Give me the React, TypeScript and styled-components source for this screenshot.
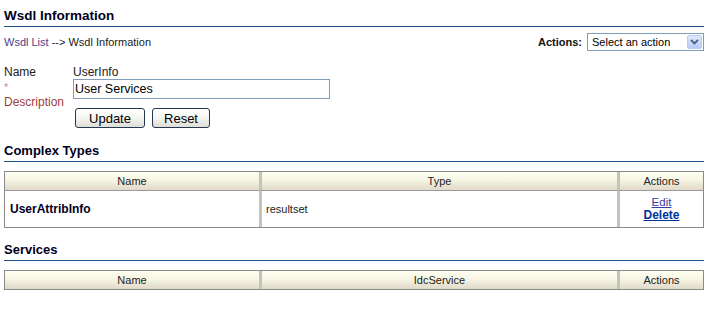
import React from "react";
import styled, { createGlobalStyle } from "styled-components";

const GlobalStyle = createGlobalStyle`
  html, body { margin: 0; padding: 0; background: #ffffff; }
  body { font-family: "Liberation Sans", Arial, sans-serif; color: #1a1a1a; }
  * { box-sizing: border-box; }
`;

const Page = styled.div`
  width: 700px;
  margin-left: 4px;
  padding-top: 8px;
`;

const SectionTitle = styled.h2<{ $size: number; $mt: number }>`
  margin: ${(p) => p.$mt}px 0 0;
  font-size: ${(p) => p.$size}px;
  line-height: 16px;
  font-weight: bold;
  color: #000022;
  padding-bottom: 2px;
  border-bottom: 1px solid #1f4f8a;
`;

const NavBar = styled.div`
  display: flex;
  justify-content: space-between;
  align-items: center;
  margin-top: 6px;
  height: 18px;
`;

const Breadcrumb = styled.div`
  font-size: 11px;
  line-height: 13px;
  color: #222;
`;

const CrumbLink = styled.span`
  color: #4a3f8c;
`;

const ActionsGroup = styled.div`
  display: flex;
  align-items: center;
  gap: 5px;
`;

const ActionsLabel = styled.span`
  font-size: 11px;
  font-weight: bold;
  line-height: 13px;
  color: #111;
`;

const SelectBox = styled.div`
  width: 117px;
  height: 18px;
  border: 1px solid #7f9db9;
  background: #fff;
  display: flex;
  align-items: center;
  padding-left: 4px;
  font-size: 11px;
  color: #000;
`;

const SelectArrow = styled.div`
  margin-left: auto;
  margin-right: 1px;
  width: 15px;
  height: 14px;
  border: 1px solid #b9cbf3;
  border-radius: 2px;
  background: linear-gradient(#dfe8fd, #b6cbf7);
  display: flex;
  align-items: center;
  justify-content: center;
`;

const Form = styled.div`
  display: grid;
  grid-template-columns: 69px auto;
  grid-template-rows: 13px 29px 20px;
  margin-top: 15px;
  font-size: 12px;
`;

const Label = styled.div`
  line-height: 13px;
  color: #222;
`;

const LabelStack = styled.div`
  line-height: 15px;
  color: #a0403a;
`;

const Required = styled.div`
  color: #c88a8a;
  font-size: 11px;
  padding-top: 1px;
`;

const Value = styled.div`
  line-height: 13px;
  color: #222;
`;

const TextInput = styled.input`
  display: block;
  width: 257px;
  height: 20px;
  border: 1px solid #7f9db9;
  padding: 0 1px;
  margin: 0;
  font-family: "Liberation Sans", Arial, sans-serif;
  font-size: 12.5px;
  color: #000;
  outline: none;
`;

const ButtonRow = styled.div`
  display: flex;
  gap: 7px;
  margin-left: 2px;
`;

const Button = styled.button<{ $w: number }>`
  width: ${(p) => p.$w}px;
  height: 20px;
  padding: 0;
  border: 1px solid #24384f;
  border-radius: 3px;
  background: linear-gradient(#ffffff, #f4f4f0 50%, #deddd6);
  font-family: "Liberation Sans", Arial, sans-serif;
  font-size: 13px;
  color: #000;
`;

const Table = styled.div`
  margin-top: 9px;
  border: 1px solid #8a8a8a;
  display: grid;
  grid-template-columns: 254px 358px 86px;
`;

const HeadCell = styled.div<{ $sep?: boolean }>`
  height: 18px;
  line-height: 18px;
  text-align: center;
  font-size: 11px;
  color: #222;
  background: linear-gradient(#fffff2, #f7f6e4 45%, #e9e5d4 75%, #e2dacb);
  border-left: ${(p) => (p.$sep ? "3px solid #bfc7bd" : "none")};
`;

const BodyCell = styled.div<{ $sep?: boolean; $pl?: number }>`
  height: 37px;
  border-top: 1px solid #9a9a9a;
  border-left: ${(p) => (p.$sep ? "3px solid #bfc7bd" : "none")};
  padding-left: ${(p) => p.$pl ?? 0}px;
  display: flex;
  align-items: center;
  font-size: 11px;
  color: #222;
`;

const NameText = styled.span`
  font-size: 12px;
  font-weight: bold;
  line-height: 14px;
  color: #000022;
`;

const ActionsCell = styled(BodyCell)`
  flex-direction: column;
  justify-content: center;
`;

const EditLink = styled.a`
  font-size: 11.5px;
  line-height: 13px;
  color: #3a3aa8;
  text-decoration: underline;
`;

const DeleteLink = styled.a`
  font-size: 12px;
  line-height: 13px;
  font-weight: bold;
  color: #003399;
  text-decoration: underline;
`;

export default function App() {
  return (
    <>
      <GlobalStyle />
      <Page>
        <SectionTitle $size={13.5} $mt={0}>Wsdl Information</SectionTitle>
        <NavBar>
          <Breadcrumb>
            <CrumbLink>Wsdl List</CrumbLink> --&gt; Wsdl Information
          </Breadcrumb>
          <ActionsGroup>
            <ActionsLabel>Actions:</ActionsLabel>
            <SelectBox>
              Select an action
              <SelectArrow>
                <svg width="9" height="6" viewBox="0 0 9 6">
                  <path d="M1 1 L4.5 4.5 L8 1" fill="none" stroke="#4d6185" strokeWidth="1.8" />
                </svg>
              </SelectArrow>
            </SelectBox>
          </ActionsGroup>
        </NavBar>

        <Form>
          <Label>Name</Label>
          <Value>UserInfo</Value>
          <LabelStack>
            <Required>*</Required>
            <div>Description</div>
          </LabelStack>
          <div>
            <TextInput defaultValue="User Services" />
          </div>
          <div />
          <ButtonRow>
            <Button $w={70}>Update</Button>
            <Button $w={58}>Reset</Button>
          </ButtonRow>
        </Form>

        <SectionTitle $size={13} $mt={15}>Complex Types</SectionTitle>
        <Table>
          <HeadCell>Name</HeadCell>
          <HeadCell $sep>Type</HeadCell>
          <HeadCell $sep>Actions</HeadCell>
          <BodyCell $pl={5}>
            <NameText>UserAttribInfo</NameText>
          </BodyCell>
          <BodyCell $sep $pl={4}>resultset</BodyCell>
          <ActionsCell $sep>
            <EditLink>Edit</EditLink>
            <DeleteLink>Delete</DeleteLink>
          </ActionsCell>
        </Table>

        <SectionTitle $size={13} $mt={14}>Services</SectionTitle>
        <Table>
          <HeadCell>Name</HeadCell>
          <HeadCell $sep>IdcService</HeadCell>
          <HeadCell $sep>Actions</HeadCell>
        </Table>
      </Page>
    </>
  );
}
